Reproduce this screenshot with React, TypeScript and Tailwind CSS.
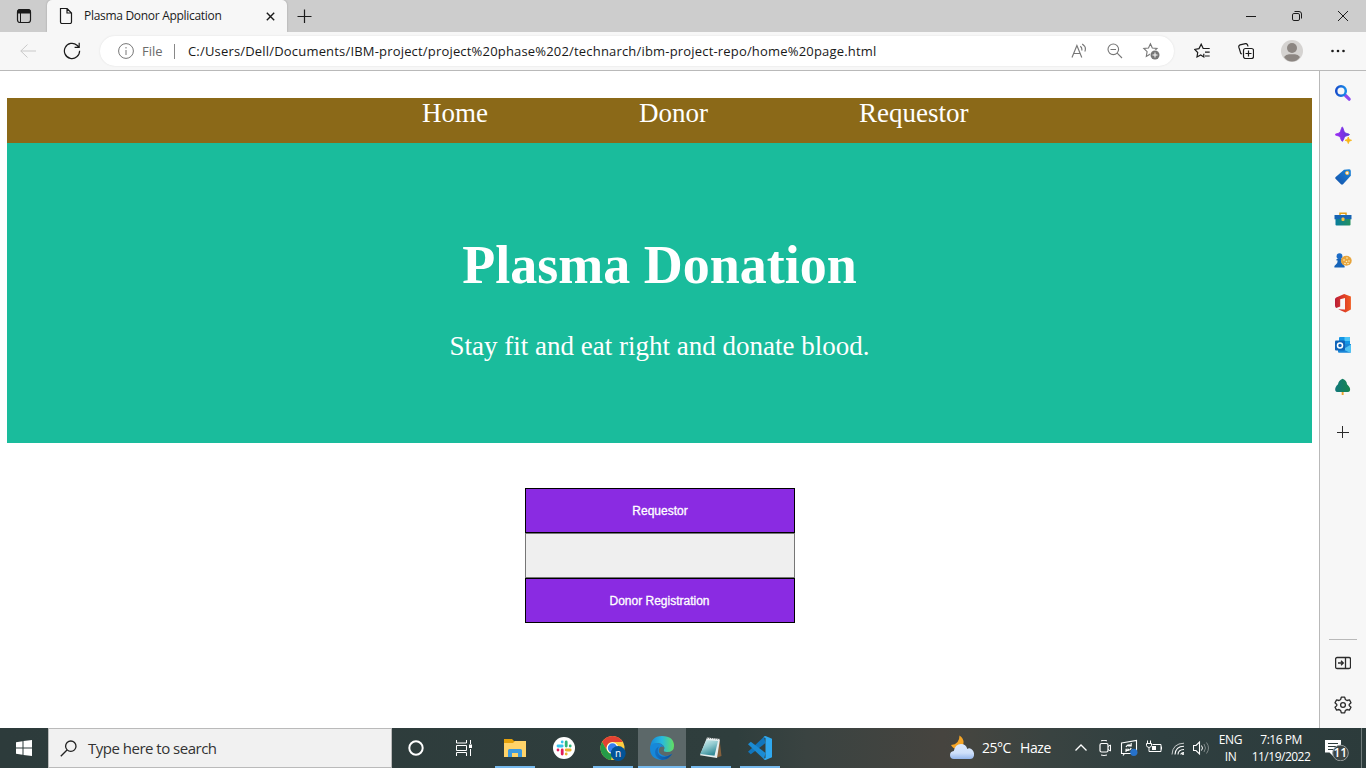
import React from "react";

const ui = "font-['Open_Sans','Noto_Sans',sans-serif]";

type IconProps = { size?: number; box?: string; className?: string; children: React.ReactNode };

function Icon({ size = 16, box = "0 0 16 16", className = "", children }: IconProps) {
  return (
    <svg width={size} height={size} viewBox={box} className={`shrink-0 ${className}`} fill="none" stroke="currentColor" strokeWidth="1">
      {children}
    </svg>
  );
}

const star = "M7.6 1 L9.5 5.2 L14.2 5.7 L10.8 8.9 L11.5 13.5 L7.6 11.2 L3.5 13.6 L4.3 8.9 L1 5.7 L5.7 5.2 Z";

function TitleBar() {
  return (
    <div className="flex h-8 shrink-0 bg-[#cdcdcd] text-[#1b1b1b]">
      <div className="flex w-[47px] items-center justify-center">
        <Icon>
          <rect x="1.5" y="1.5" width="13" height="13" rx="2.5" strokeWidth="1.2" />
          <path d="M2 2.6 Q2 1.5 4 1.5 H12 Q14.5 1.5 14.5 4 V5 H2 Z" fill="currentColor" />
          <path d="M4.5 5 V14" />
        </Icon>
      </div>
      <div className="flex w-60 items-center rounded-t-[5px] bg-[#f7f7f7] pl-[11px] shadow-[0_0_2px_#999]">
        <Icon>
          <path d="M2.5 .5 H9 L13.5 5 V14 Q13.5 15.5 12 15.5 H4 Q2.5 15.5 2.5 14 Z M9 .5 V5 H13.5" strokeWidth="1.2" />
        </Icon>
        <span className={`${ui} ml-[10px] w-[182px] whitespace-nowrap text-[12px] leading-4 tracking-[-0.3px]`}>Plasma Donor Application</span>
        <Icon size={9} box="0 0 9 9"><path d="M.8 .8 L8.2 8.2 M8.2 .8 L.8 8.2" strokeWidth="1.4" /></Icon>
      </div>
      <div className="flex w-[34px] items-center justify-center">
        <Icon><path d="M8.5 1.5 V15 M1.5 8.5 H15.5" strokeWidth="1.2" /></Icon>
      </div>
      <div className="ml-auto flex w-[138px] items-center">
        <div className="flex w-[46px] justify-center"><Icon size={10} box="0 0 10 10"><path d="M0 5.5 H10" /></Icon></div>
        <div className="flex w-[46px] justify-center">
          <Icon size={10} box="0 0 10 10"><rect x=".5" y="2.5" width="7" height="7" rx="1.4" /><path d="M2.5 .5 H7 Q9.5 .5 9.5 3 V7.5" /></Icon>
        </div>
        <div className="flex w-[46px] justify-center"><Icon size={10} box="0 0 10 10"><path d="M0 0 L10 10 M10 0 L0 10" /></Icon></div>
      </div>
    </div>
  );
}

function ToolBar() {
  return (
    <div className="flex h-[39px] shrink-0 items-center border-b border-[#b9b9b9] bg-[#f7f7f7] text-[#1b1b1b]">
      <div className="flex w-14 justify-center text-[#c9c9c9]">
        <Icon><path d="M16 8 H.8 M7.5 1.5 L.8 8 L7.5 14.5" /></Icon>
      </div>
      <div className="flex w-8 justify-center">
        <Icon size={18} box="0 0 18 18"><path d="M16.6 8.8 A7.6 7.6 0 1 1 14 3.2 L16.2 5.3 M16.2 .8 V5.4 H11.6" strokeWidth="1.2" /></Icon>
      </div>
      <div className="ml-3 flex h-[30px] w-[1074px] items-center rounded-full bg-white shadow-[0_0_2px_#ddd]">
        <Icon className="ml-[18px] text-[#777]"><circle cx="8" cy="8" r="7.4" /><path d="M8 7 V12 M8 4 V5.5" /></Icon>
        <span className={`${ui} ml-2 w-[31px] whitespace-nowrap text-[13px] leading-5 text-[#6b6b6b]`}>File</span>
        <div className="ml-px h-[15px] w-px bg-[#888]" />
        <span className={`${ui} ml-[13px] grow whitespace-nowrap text-[13px] leading-5 tracking-[0.182px] text-[#191919]`}>
          C:/Users/Dell/Documents/IBM-project/project%20phase%202/technarch/ibm-project-repo/home%20page.html
        </span>
        <div className="flex w-9 justify-center text-[#777]">
          <Icon><path d="M1 14.5 L5.9 2.5 L10.8 14.5 M2.9 10.5 H9 M9.3 3.3 Q11.4 5 10.7 7.5 M11.2 1 Q15.8 4 13.8 8.5" strokeWidth="1.15" /></Icon>
        </div>
        <div className="flex w-9 justify-center text-[#777]">
          <Icon><circle cx="6.3" cy="6.3" r="5.3" strokeWidth="1.1" /><path d="M3.5 6.5 H9 M10.2 10.2 L15 15" strokeWidth="1.1" /></Icon>
        </div>
        <div className="mr-[5px] flex w-9 justify-center text-[#777]">
          <Icon size={18} box="0 0 18 18">
            <path d={star} transform="translate(.8 .8)" strokeWidth="1.1" />
            <circle cx="13" cy="13" r="5.2" fill="#fff" stroke="none" />
            <circle cx="13" cy="13" r="4.5" fill="currentColor" stroke="none" />
            <path d="M13 10.5 V15.5 M10.5 13 H15.5" stroke="#fff" />
          </Icon>
        </div>
      </div>
      <div className="ml-[6px] flex w-11 justify-center">
        <Icon><path d="M9.8 10.8 V14 L6.7 12 L3 14 L3.7 9.5 L.7 6.4 L5 5.6 L7.2 1.2 L9.2 5.5 H15.7 M11 9.2 H15.7 M11 13 H15.7" strokeWidth="1.2" /></Icon>
      </div>
      <div className="flex w-11 justify-center">
        <Icon>
          <rect x="5.5" y="5.5" width="10" height="10" rx="2" strokeWidth="1.2" />
          <path d="M10.5 7.5 V13.5 M7.5 10.5 H13.5 M4 11 L2.8 10.5 L.8 4.2 Q.5 2.5 2 1.9 L7.5 .6 Q9.5 .4 10 3.5" strokeWidth="1.2" />
        </Icon>
      </div>
      <div className="flex w-12 justify-center">
        <Icon size={22} box="0 0 22 22" className="text-[#8c8682]">
          <circle cx="11" cy="11" r="11" fill="#d5d3d1" stroke="none" />
          <circle cx="11" cy="8" r="5" fill="currentColor" stroke="none" />
          <path d="M3 17 Q5 14.3 8 14.3 H14 Q17 14.3 19 17 Q16 21.5 11 21.5 Q6 21.5 3 17 Z" fill="currentColor" stroke="none" />
        </Icon>
      </div>
      <div className="flex w-11 justify-center">
        <Icon><g fill="currentColor" stroke="none"><circle cx="2.5" cy="8" r="1.3" /><circle cx="8" cy="8" r="1.3" /><circle cx="13.5" cy="8" r="1.3" /></g></Icon>
      </div>
    </div>
  );
}

function WebPage() {
  return (
    <main className="w-[1319px] bg-white px-[7px] pt-[27px] font-['Liberation_Serif',serif] text-white">
      <nav className="flex h-[45px] w-[1305px] gap-[151px] bg-[#8b6918] pl-[415px] text-[27px] leading-[31px]">
        <a>Home</a>
        <a>Donor</a>
        <a>Requestor</a>
      </nav>
      <header className="h-[300px] w-[1305px] bg-[#1abc9c] pt-[91px] text-center">
        <h1 className="text-[54px] font-bold leading-[62px]">Plasma Donation</h1>
        <p className="mt-[35px] text-[27px] leading-[31px]">Stay fit and eat right and donate blood.</p>
      </header>
      <div className="ml-[518px] mt-[45px] flex w-[270px] flex-col font-['Liberation_Sans',sans-serif] text-[12px] [-webkit-text-stroke:0.3px_white]">
        <button className="h-[45px] border border-black bg-[#8a2be2]">Requestor</button>
        <button className="h-[45px] border border-[#767676] bg-[#efefef]" />
        <button className="h-[45px] border border-black bg-[#8a2be2] pr-px">Donor Registration</button>
      </div>
    </main>
  );
}

const sideIcons: React.ReactNode[] = [
  <>
    <path d="M10.5 10.5 L14.2 14.2" stroke="#8d48ee" strokeWidth="3.2" strokeLinecap="round" />
    <circle cx="6" cy="6" r="4.8" stroke="url(#lens)" strokeWidth="2.5" />
  </>,
  <>
    <path d="M7.2 0 Q7.8 0 8.2 1.6 Q9 5.3 10.4 6 L13.8 7 Q15.2 7.5 13.8 8.2 L10.4 9.2 Q9.2 10 8.2 13.4 Q7.2 15.2 6.4 13.4 Q5.3 9.8 4.2 9.2 L.8 8.2 Q-.5 7.5 .8 7 L4.2 6 Q5.5 5.2 6.4 1.6 Q6.7 0 7.2 0 Z" fill="url(#spark)" stroke="url(#spark)" strokeWidth=".8" />
    <path d="M13.3 10 L14.2 12.4 L16.6 13.3 L14.2 14.2 L13.3 16.6 L12.4 14.2 L10 13.3 L12.4 12.4 Z" fill="#f9b616" stroke="#f9b616" strokeWidth=".8" />
  </>,
  <>
    <path d="M9 .7 L14.3 .2 Q15.8 .2 15.8 2 V6.8 L8 15.3 Q7 16.2 6 15.3 L.5 9.7 Q-.2 8.8 .7 8 Z" fill="url(#tag)" stroke="none" />
    <circle cx="12.2" cy="4" r="1.7" fill="#f4f4f4" stroke="#e9b44c" />
  </>,
  <>
    <path d="M5 4 V2.2 H11 V4" stroke="#e4a11b" strokeWidth="1.5" />
    <path d="M-.5 4 H16.5 V8.3 H-.5 Z" fill="#1764b3" stroke="none" />
    <path d="M.5 8 H15.5 V13.7 Q15.5 14.5 14.5 14.5 H1.5 Q.5 14.5 .5 13.7 Z" fill="url(#case)" stroke="none" />
    <rect x="6.5" y="6.5" width="3" height="3.5" rx="1" fill="#f6c244" stroke="none" />
  </>,
  <>
    <circle cx="4.5" cy="3.2" r="2.9" fill="#1c6cc7" stroke="none" />
    <path d="M1.5 6 H7.5 V7.4 H6.3 Q6.3 10 8 11.5 L9.6 13 V14.6 H-.6 V13 L.9 11.5 Q2.7 10 2.7 7.4 H1.5 Z" fill="#1764b8" stroke="none" />
    <ellipse cx="11.3" cy="7.8" rx="5.4" ry="5" fill="#e7a43b" stroke="none" />
    <g fill="#fff1c4" stroke="none"><circle cx="9" cy="7" r=".8" /><circle cx="12" cy="5" r=".8" /><circle cx="14" cy="8" r=".8" /><circle cx="11.5" cy="8.5" r=".8" /><circle cx="10" cy="10.5" r=".8" /><circle cx="13" cy="10.5" r=".8" /></g>
  </>,
  <path d="M9.2 -.9 L15.9 1.6 V14.5 L10.4 17.4 L3.2 14.3 L10 14.6 V2.9 L5.2 4.2 V11.5 L1.2 13 Q0 12 0 10.4 V4.2 Q.1 3.2 1.2 2.6 Z" fill="url(#office)" stroke="none" />,
  <>
    <path d="M5 0 H14.2 Q15 0 15 1 V8 H4 V1 Q4 0 5 0 Z" fill="#1496e5" stroke="none" />
    <path d="M9.5 0 H14.2 Q15 0 15 1 V4 H9.5 Z" fill="#4cc5f7" stroke="none" />
    <path d="M3 7 H16 V14.5 Q16 15.7 15 15.7 H4 Q3 15.7 3 14.5 Z" fill="#1a87d8" stroke="none" />
    <path d="M16 7.5 L8 12.3 L15 15.7 Q16 15.7 16 14.5 Z" fill="#50c3f3" stroke="none" />
    <rect x="0" y="3.5" width="10" height="10" rx="1" fill="#0f64b8" stroke="none" />
    <circle cx="5" cy="8.4" r="2.5" stroke="#fff" strokeWidth="1.5" />
  </>,
  <>
    <rect x="6.7" y="12" width="1.9" height="4" fill="#eba42e" stroke="none" />
    <path d="M7.6 -.3 Q11.8 1.2 12 5.2 Q15.8 8.5 15 11.5 Q14.6 13 12.4 13 H2.6 Q.6 13 .3 11.5 Q-.5 8.5 3 5.3 Q3.5 1.5 7.6 -.3 Z" fill="url(#tree)" stroke="none" />
  </>,
];

function SideBar() {
  return (
    <aside className="flex grow flex-col border-l border-[#b9b9b9] bg-[#f7f7f7] text-[#2b2b2b]">
      <svg width="0" height="0" className="absolute">
        <defs>
          <linearGradient id="lens"><stop stopColor="#174ecb" /><stop offset="1" stopColor="#188bea" /></linearGradient>
          <linearGradient id="spark"><stop stopColor="#a02cf5" /><stop offset="1" stopColor="#593bd5" /></linearGradient>
          <linearGradient id="tag" x1="0" y1="1" x2="1" y2="0"><stop stopColor="#1450a8" /><stop offset="1" stopColor="#1b86dc" /></linearGradient>
          <linearGradient id="case"><stop stopColor="#087c9d" /><stop offset="1" stopColor="#25915e" /></linearGradient>
          <linearGradient id="office"><stop stopColor="#b91d39" /><stop offset=".5" stopColor="#dc3b28" /><stop offset="1" stopColor="#f05b20" /></linearGradient>
          <linearGradient id="tree"><stop stopColor="#11777b" /><stop offset="1" stopColor="#16864d" /></linearGradient>
        </defs>
      </svg>
      <div className="mt-px">
        {sideIcons.map((drawing, i) => (
          <div key={i} className="flex h-[42px] items-center justify-center"><Icon className="overflow-visible">{drawing}</Icon></div>
        ))}
      </div>
      <div className="mt-[3px] flex h-[42px] items-center justify-center"><Icon size={12} box="0 0 12 12"><path d="M5.5 0 V12 M0 6.5 H12" /></Icon></div>
      <div className="mx-auto mt-auto h-px w-7 shrink-0 bg-[#b9b9b9]" />
      <div className="mt-[2px] flex h-[42px] shrink-0 items-center justify-center">
        <Icon><rect x=".6" y="2.5" width="14.9" height="11" rx="1.5" strokeWidth="1.3" /><path d="M10.5 2.5 V13.5 M3 8 H8 M6 5.8 L8.3 8 L6 10.2" strokeWidth="1.3" /></Icon>
      </div>
      <div className="mb-[2px] flex h-[42px] shrink-0 items-center justify-center">
        <Icon size={18} box="0 0 18 18">
          <path d="M7.3 1.2 H10.7 L11.4 3.6 Q12.2 3.9 13 4.5 L15.5 3.9 L17 6.8 L15.2 8.5 V9.6 L17 11.3 L15.4 14.1 L13 13.5 Q12.2 14.2 11.4 14.4 L10.7 16.8 H7.3 L6.6 14.4 Q5.8 14.2 5 13.5 L2.6 14.1 L1 11.3 L2.8 9.6 V8.5 L1 6.8 L2.6 3.9 L5 4.5 Q5.8 3.9 6.6 3.6 Z" strokeWidth="1.3" strokeLinejoin="round" />
          <circle cx="9" cy="9" r="2.4" strokeWidth="1.3" />
        </Icon>
      </div>
    </aside>
  );
}

function TaskButton({ children, open, active, width = "w-[49px]" }: { children: React.ReactNode; open?: boolean; active?: boolean; width?: string }) {
  return (
    <div className={`flex h-10 shrink-0 flex-col items-center ${width} ${active ? "bg-[#5c6869]" : ""}`}>
      <div className="flex h-[38px] items-center pt-[2px]">{children}</div>
      {open && <div className={`h-[2px] bg-[#76b9ed] ${active ? "w-full" : "w-10"}`} />}
    </div>
  );
}

function TaskBar() {
  return (
    <footer className={`${ui} flex h-10 shrink-0 items-center bg-[linear-gradient(90deg,#2d3b3b_0%,#2f3e3d_54%,#3a4341_59%,#46443f_69%,#444540_71%,#394341_77%,#2f3f40_85%,#2c3b3b_100%)] text-white`}>
      <div className="flex w-12 justify-center">
        <Icon><path d="M0 2.2 L6.5 1.3 V7.5 H0 Z M7.5 1.1 L16 0 V7.5 H7.5 Z M0 8.5 H6.5 V14.7 L0 13.8 Z M7.5 8.5 H16 V16 L7.5 14.9 Z" fill="#fff" stroke="none" /></Icon>
      </div>
      <div className="flex h-10 w-[344px] items-center border border-[#bababa] bg-[#f1f1f1] pl-[11px] text-[#222]">
        <Icon size={17} box="0 0 17 17"><circle cx="10.8" cy="6.2" r="5.2" strokeWidth="1.3" /><path d="M7 10 L.8 16.3" strokeWidth="1.3" /></Icon>
        <span className="ml-[11px] whitespace-nowrap text-[15px] leading-5 tracking-[-0.5px] text-[#333]">Type here to search</span>
      </div>
      <TaskButton width="w-12"><Icon><circle cx="8" cy="8" r="6.7" strokeWidth="2" /></Icon></TaskButton>
      <TaskButton width="w-12">
        <Icon><path d="M.5 0 V3 H10.5 V0 M.5 16 V12.5 H10.5 V16 M.5 5.5 H10.5 V10.5 H.5 Z M14.5 0 V4 M14.5 9 V16" /><rect x="13" y="4.5" width="3" height="3.5" fill="#fff" stroke="none" /></Icon>
      </TaskButton>
      <div className="w-[3px]" />
      <TaskButton open width="w-12">
        <Icon size={22} box="0 0 22 22"><g stroke="none"><path d="M0 2 H8 L10 4 H21 Q22 4 22 5 V20 H0 Z" fill="#e5a10b" /><path d="M0 6 H9 L11 4 H22 V20 H0 Z" fill="#ffd369" /><path d="M4 20 V13.5 Q4 12 5.5 12 H16.5 Q18 12 18 13.5 V20 H14 V16 H8 V20 Z" fill="#3d9adf" /></g></Icon>
      </TaskButton>
      <TaskButton width="w-[50px]">
        <Icon size={22} box="0 0 22 22">
          <circle cx="11" cy="11" r="11" fill="#fff" stroke="none" />
          <g strokeWidth="2.8" strokeLinecap="round"><path d="M9.2 5 V5.1 M5 9 H9.2" stroke="#36c5f0" /><path d="M13.2 5 V9 M17.2 9 V9.1" stroke="#2eb67d" /><path d="M13.2 13 H17.2 M13.2 17 V17.1" stroke="#ecb22e" /><path d="M9.2 13 V17 M5 13 V13.1" stroke="#e01e5a" /></g>
        </Icon>
      </TaskButton>
      <TaskButton open width="w-12">
        <Icon size={26} box="0 0 26 26">
          <g stroke="none">
            <circle cx="12.5" cy="13" r="12" fill="#ffcd40" />
            <path d="M2.1 7 A12 12 0 0 1 22.9 7 H12.5 A6 6 0 0 0 7.2 16 Z" fill="#e34133" />
            <path d="M2.1 7 L7.3 16 A6 6 0 0 0 12.5 19 L11 25 A12 12 0 0 1 2.1 7 Z" fill="#259b48" />
            <circle cx="12.5" cy="13" r="5.8" fill="#fff" /><circle cx="12.5" cy="13" r="4.7" fill="#377fec" />
            <circle cx="18.2" cy="18.5" r="7.5" fill="#035397" />
          </g>
          <text x="18.1" y="21.8" textAnchor="middle" fontSize="10" fill="#fff" stroke="none">n</text>
        </Icon>
      </TaskButton>
      <div className="w-px" />
      <TaskButton width="w-12" open active>
        <Icon size={24} box="0 0 24 24">
          <defs>
            <linearGradient id="edgeTop"><stop stopColor="#1788da" /><stop offset=".5" stopColor="#27b9df" /><stop offset="1" stopColor="#63df60" /></linearGradient>
            <linearGradient id="edgeLow"><stop stopColor="#1471c4" /><stop offset="1" stopColor="#124b91" /></linearGradient>
          </defs>
          <g stroke="none">
            <path d="M0 13 Q.6 0 12 0 Q24 0 24 10 Q24 16 17 16 Q13 16 14 13.5 Q15.3 12 13.5 9.8 Q10 6 4.5 8 Q1 9.5 0 13 Z" fill="url(#edgeTop)" />
            <path d="M0 12 Q2 5.8 9 7.4 Q13 8.2 14 11.5 Q10.5 8.8 8.9 13.2 Q8 18.5 15 20 Q19 20.2 22.2 17.8 Q18.5 24 12 24 Q0 23.5 0 12 Z" fill="#1688d9" />
            <path d="M8.8 10.4 Q6 16 10 19.5 Q15 22.5 22.2 17.8 Q18.5 24 12 24 Q5 22 5 16 Q5 12.5 8.8 10.4 Z" fill="url(#edgeLow)" />
          </g>
        </Icon>
      </TaskButton>
      <TaskButton open width="w-[50px]">
        <Icon size={24} box="0 0 24 24">
          <defs><linearGradient id="note" x1="0" y1="0" x2=".5" y2="1"><stop stopColor="#ddf3f3" /><stop offset=".5" stopColor="#8fc9ce" /><stop offset="1" stopColor="#348b98" /></linearGradient></defs>
          <g stroke="none"><path d="M20.5 3 L22.5 20 L16.5 22 Z" fill="#86613d" /><path d="M8 1.5 L21 3 L18 22 L1 19.3 Z" fill="#e8efef" /><path d="M7.5 4 L19 5 L15.5 19.8 L1.2 18 Z" fill="url(#note)" /><path d="M8 2 L21 3.3" stroke="#777" strokeDasharray="1 1" /></g>
        </Icon>
      </TaskButton>
      <TaskButton open width="w-12">
        <Icon size={24} box="0 0 24 24"><g stroke="none"><path d="M17.5 7 L2.8 18.2 L0 15.7 L16 .8 Z" fill="#1176bd" /><path d="M17.5 17 L2.8 5.8 L0 8.3 L16 23.2 Z" fill="#1b8bd3" /><path d="M17.5 0 L24 2.8 V21.2 L17.5 24 Q16 24 15.5 22.8 L17.5 22 V2 L15.5 1.2 Q16 0 17.5 0 Z" fill="#2fa8ef" /></g></Icon>
      </TaskButton>
      <div className="ml-auto flex w-[417px] items-center">
        <Icon size={26} box="0 0 26 26">
          <defs><linearGradient id="cloud" x1="0" y1="0" x2="0" y2="1"><stop stopColor="#dce9fd" /><stop offset=".6" stopColor="#cfe0fa" /><stop offset="1" stopColor="#94b6ec" /></linearGradient></defs>
          <g stroke="none"><path d="M10.5 .5 Q14.8 3 14.5 8 Q14 13 8.5 14 Q4 14 2 10 Q10.5 9.5 10.5 .5 Z" fill="#f6a526" /><path d="M5 24 Q1 24 1 20 Q1 16.5 4.8 16 Q6.3 9 12 9 Q17 9 18.3 14 Q20 12.7 22.3 14 Q25.5 16 25 20.5 Q24.3 24 21 24 Z" fill="url(#cloud)" /></g>
        </Icon>
        <span className="ml-[7px] w-[38px] whitespace-nowrap text-[14px] leading-5 tracking-[-0.5px]">25°C</span>
        <span className="w-[49px] whitespace-nowrap text-[14px] leading-5 tracking-[-0.4px]">Haze</span>
        <div className="flex w-6 justify-center"><Icon size={12} box="0 0 12 12"><path d="M.5 8.5 L6 3 L11.5 8.5" strokeWidth="1.3" /></Icon></div>
        <div className="flex w-6 justify-center"><Icon><rect x="3" y="3.5" width="8" height="8.5" rx="1.5" strokeWidth="1.2" /><path d="M11 6.5 L13.5 5 V11 L11 9.5 M4 .8 Q7 -.2 10 .8 M4 15 Q7 16 10 15" /></Icon></div>
        <div className="flex w-6 justify-center">
          <Icon className="overflow-visible"><path d="M.5 3 L15.5 .5 V13.5 H.5 Z M3.5 13.5 L2 15.5 M5 7 Q6.5 4 9.8 5.2 M10.2 3 V6 H7.2 M10.2 8 Q9 11.3 5.3 10.2 M5 12 V9.2 H8" strokeWidth="1.1" /><circle cx="12.8" cy="12.3" r="3.6" fill="#2672cb" stroke="none" /></Icon>
        </div>
        <div className="flex w-[25px] justify-center"><Icon><path d="M6.5 4.5 H15 V11.5 H3 V8 M1.5 .5 V3 M4.5 .5 V3 M.5 3.5 H5.5 V5.5 Q5 7.5 3 7.5 Q1 7.5 .5 5.5 Z" /><rect x="6" y="6" width="4" height="4" fill="#fff" stroke="none" /><path d="M15.5 6.5 V9.5" /></Icon></div>
        <div className="flex w-6 justify-center"><Icon><path d="M2 14.5 Q2.5 3.5 14 3.2" stroke="#c4c8c8" /><path d="M5 14.5 Q5.5 6.5 14 6.3 M8 14.5 Q8 9.7 14 9.5 M10.8 14.5 Q11 12.6 14 12.5" strokeWidth="1.1" /><circle cx="13" cy="14" r="1.1" fill="#fff" stroke="none" /></Icon></div>
        <div className="flex w-[21px] justify-center"><Icon><path d="M.5 5.5 H3 L6.5 2 V14 L3 10.5 H.5 Z" strokeWidth="1.1" /><path d="M8.5 5.5 Q10.5 8 8.5 10.5" /><path d="M11 4 Q14 8 11 12 M13.5 2.5 Q17.5 8 13.5 13.5" stroke="#7e8888" /></Icon></div>
        <div className="flex w-[38px] flex-col whitespace-nowrap pl-px text-center text-[12px] leading-[17px] tracking-[-0.35px]"><span>ENG</span><span>IN</span></div>
        <div className="flex w-[64px] flex-col whitespace-nowrap text-center text-[12px] leading-[17px] tracking-[-0.5px]"><span>7:16 PM</span><span>11/19/2022</span></div>
        <div className="flex w-[48px] justify-center pl-[2px]">
          <Icon size={26} box="0 0 26 26">
            <path d="M0 5 H16 V17.5 H8 V21 L4.5 17.5 H0 Z" fill="#fff" stroke="none" />
            <path d="M3 8.5 H13 M3 11.5 H13 M3 14.5 H9" stroke="#2c3b3b" />
            <circle cx="15.5" cy="18" r="7.8" fill="#3c4646" stroke="#959b9b" />
            <text x="15.3" y="22.2" fontSize="12" fontWeight="600" textAnchor="middle" fill="#fff" stroke="none">11</text>
          </Icon>
        </div>
        <div className="h-10 w-px bg-[#707b7b]" />
      </div>
    </footer>
  );
}

export default function App() {
  return (
    <div className="flex h-[768px] w-[1366px] flex-col overflow-hidden bg-white">
      <TitleBar />
      <ToolBar />
      <div className="flex h-[657px] shrink-0"><WebPage /><SideBar /></div>
      <TaskBar />
    </div>
  );
}
